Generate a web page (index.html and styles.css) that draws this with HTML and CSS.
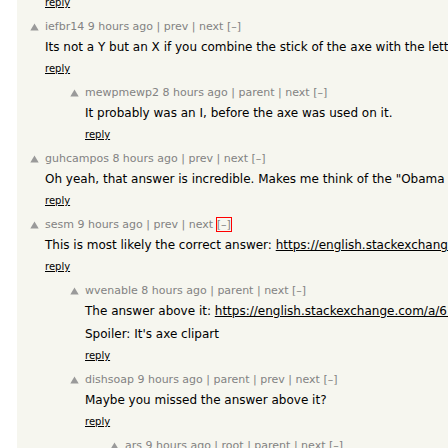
FILE: index.html
```
<!DOCTYPE html>
<html>
<head>
<meta charset="utf-8">
<link rel="stylesheet" href="styles.css">
</head>
<body>
<div class="page">
  <div class="thread">
    <div class="prev-reply"><span class="reply">reply</span></div>

    <div class="comment lvl0">
      <div class="vote"><svg width="9" height="8" viewBox="0 0 9 8"><polygon points="4.5,0.5 8.7,7.5 0.3,7.5" fill="#9a9a9a"/></svg></div>
      <div class="body">
        <div class="head"><span class="user">iefbr14</span> <span>9 hours ago</span> | <span>prev</span> | <span>next</span> <span class="toggle">[–]</span></div>
        <div class="text"><p>Its not a Y but an X if you combine the stick of the axe with the letter and read it the other way around.</p></div>
        <div class="foot"><span class="reply">reply</span></div>
      </div>
    </div>

    <div class="comment lvl1">
      <div class="vote"><svg width="9" height="8" viewBox="0 0 9 8"><polygon points="4.5,0.5 8.7,7.5 0.3,7.5" fill="#9a9a9a"/></svg></div>
      <div class="body">
        <div class="head"><span class="user">mewpmewp2</span> <span>8 hours ago</span> | <span>parent</span> | <span>next</span> <span class="toggle">[–]</span></div>
        <div class="text"><p>It probably was an I, before the axe was used on it.</p></div>
        <div class="foot"><span class="reply">reply</span></div>
      </div>
    </div>

    <div class="comment lvl0">
      <div class="vote"><svg width="9" height="8" viewBox="0 0 9 8"><polygon points="4.5,0.5 8.7,7.5 0.3,7.5" fill="#9a9a9a"/></svg></div>
      <div class="body">
        <div class="head"><span class="user">guhcampos</span> <span>8 hours ago</span> | <span>prev</span> | <span>next</span> <span class="toggle">[–]</span></div>
        <div class="text"><p>Oh yeah, that answer is incredible. Makes me think of the "Obama is the letter O" kind of logic.</p></div>
        <div class="foot"><span class="reply">reply</span></div>
      </div>
    </div>

    <div class="comment lvl0">
      <div class="vote"><svg width="9" height="8" viewBox="0 0 9 8"><polygon points="4.5,0.5 8.7,7.5 0.3,7.5" fill="#9a9a9a"/></svg></div>
      <div class="body">
        <div class="head"><span class="user">sesm</span> <span>9 hours ago</span> | <span>prev</span> | <span>next</span> <span class="toggle focused">[–]</span></div>
        <div class="text"><p>This is most likely the correct answer: <a class="link">https://english.stackexchange.com/a/617219</a></p></div>
        <div class="foot"><span class="reply">reply</span></div>
      </div>
    </div>

    <div class="comment lvl1">
      <div class="vote"><svg width="9" height="8" viewBox="0 0 9 8"><polygon points="4.5,0.5 8.7,7.5 0.3,7.5" fill="#9a9a9a"/></svg></div>
      <div class="body">
        <div class="head"><span class="user">wvenable</span> <span>8 hours ago</span> | <span>parent</span> | <span>next</span> <span class="toggle">[–]</span></div>
        <div class="text"><p>The answer above it: <a class="link">https://english.stackexchange.com/a/617210</a></p><p>Spoiler: It's axe clipart</p></div>
        <div class="foot"><span class="reply">reply</span></div>
      </div>
    </div>

    <div class="comment lvl1">
      <div class="vote"><svg width="9" height="8" viewBox="0 0 9 8"><polygon points="4.5,0.5 8.7,7.5 0.3,7.5" fill="#9a9a9a"/></svg></div>
      <div class="body">
        <div class="head"><span class="user">dishsoap</span> <span>9 hours ago</span> | <span>parent</span> | <span>prev</span> | <span>next</span> <span class="toggle">[–]</span></div>
        <div class="text"><p>Maybe you missed the answer above it?</p></div>
        <div class="foot"><span class="reply">reply</span></div>
      </div>
    </div>

    <div class="comment lvl2">
      <div class="vote"><svg width="9" height="8" viewBox="0 0 9 8"><polygon points="4.5,0.5 8.7,7.5 0.3,7.5" fill="#9a9a9a"/></svg></div>
      <div class="body">
        <div class="head"><span class="user">ars</span> <span>9 hours ago</span> | <span>root</span> | <span>parent</span> | <span>next</span> <span class="toggle">[–]</span></div>
        <div class="text"><p>Yes, I did.</p></div>
        <div class="foot"><span class="reply">reply</span></div>
      </div>
    </div>
  </div>
</div>
</body>
</html>
```
FILE: styles.css
```
html, body {
  margin: 0;
  padding: 0;
  background: #ffffff;
  overflow: hidden;
  width: 448px;
  height: 448px;
}

.page {
  margin-left: 17px;
  width: 1400px;
  height: 448px;
  background: #f6f6ef;
  overflow: hidden;
  font-family: "DejaVu Sans", sans-serif;
  color: #000000;
  white-space: nowrap;
}

.thread {
  padding-left: 11px;
}

.prev-reply {
  margin-top: -4px;
  padding-left: 17px;
  padding-bottom: 10px;
  font-size: 10px;
  line-height: 14px;
}

.comment {
  display: flex;
  padding-bottom: 10px;
}

.lvl1 { padding-left: 40px; }
.lvl2 { padding-left: 80px; }

.vote {
  width: 17px;
  flex: none;
  padding-top: 3px;
  padding-left: 2px;
  box-sizing: border-box;
  line-height: 0;
}

.body {
  display: flex;
  flex-direction: column;
}

.head {
  font-size: 11px;
  line-height: 14px;
  color: #828282;
}

.toggle.focused {
  outline: 1px solid #ff0000;
  outline-offset: 0;
}

.text {
  font-size: 12px;
  line-height: 16px;
  margin-top: 5px;
}

.text p {
  margin: 0;
}

.text p + p {
  margin-top: 7px;
}

.link {
  color: #000000;
  text-decoration: underline;
}

.foot {
  margin-top: 7px;
  font-size: 10px;
  line-height: 14px;
}

.reply {
  font-size: 10px;
  text-decoration: underline;
  color: #000000;
}
```
